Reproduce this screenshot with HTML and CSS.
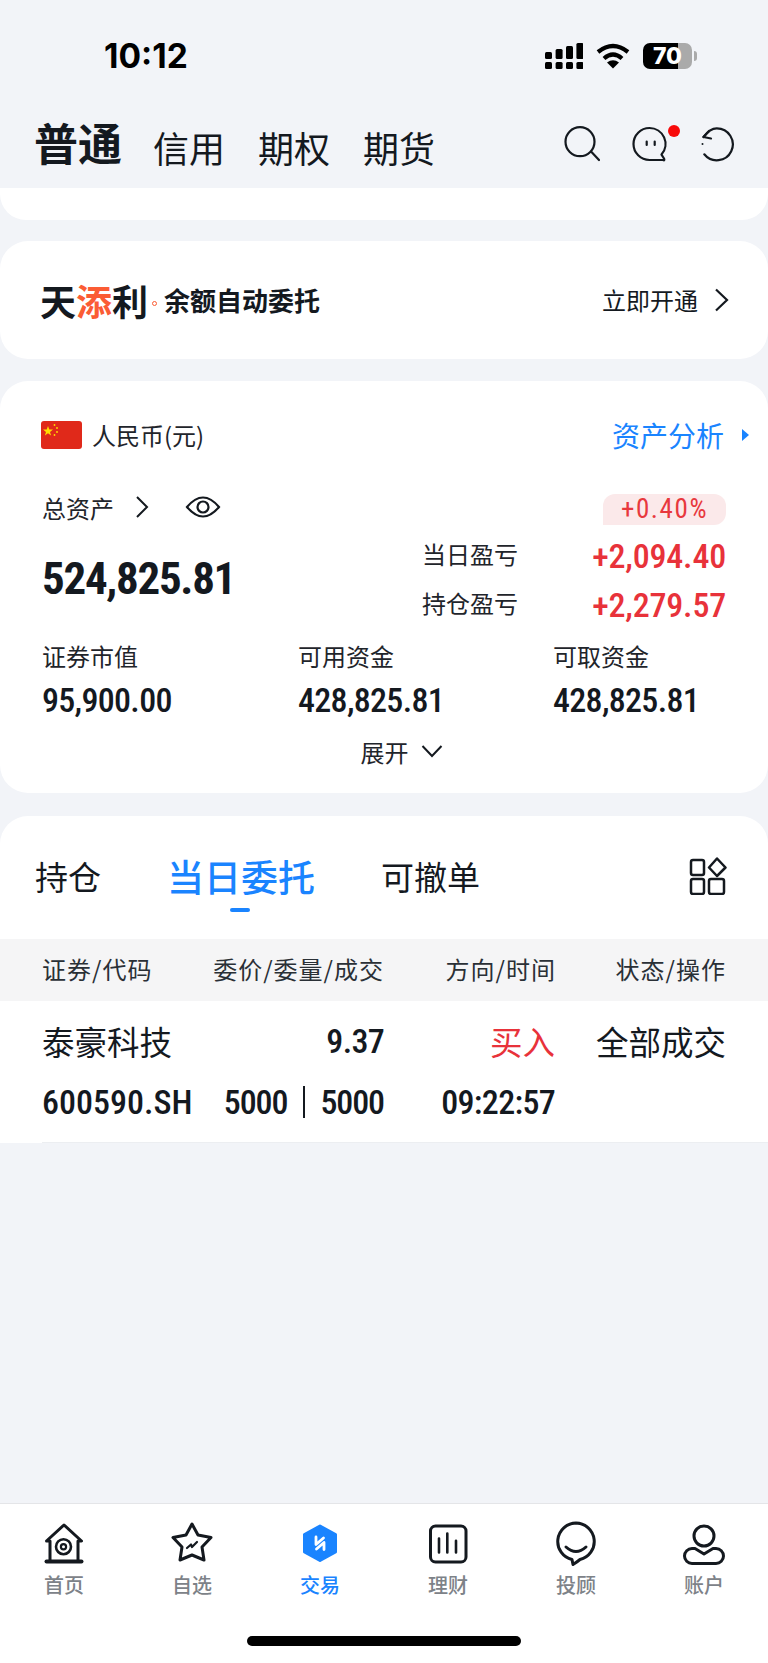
FILE: index.html
```html
<!DOCTYPE html>
<html lang="zh-CN">
<head>
    <meta charset="UTF-8">
    <meta name="viewport" content="width=device-width, initial-scale=1.0">
    <title>交易</title>
    <link rel="stylesheet" href="styles.css">
</head>
<body>
    <div class="status-bar">
        <span class="clock">10:12</span>
        <div class="status-icons">
            <svg class="signal" width="38" height="26" viewBox="0 0 38 26" fill="#000">
                <rect x="0" y="19" width="7" height="7" rx="1.5"/>
                <rect x="10.6" y="19" width="7" height="7" rx="1.5"/>
                <rect x="21" y="19" width="7" height="7" rx="1.5"/>
                <rect x="31.4" y="19" width="7" height="7" rx="1.5"/>
                <rect x="0" y="9" width="7" height="7" rx="1.5"/>
                <rect x="10.6" y="6" width="7" height="10" rx="1.5"/>
                <rect x="21" y="3" width="7" height="13" rx="1.5"/>
                <rect x="31.4" y="0" width="7" height="16" rx="1.5"/>
            </svg>
            <svg class="wifi" width="34" height="26" viewBox="0 0 34 26" fill="none" stroke="#000">
                <path d="M2 9Q17 -3 32 9" stroke-width="4.2"/>
                <path d="M8 15.5Q17 7.5 26 15.5" stroke-width="4.2"/>
                <path d="M17 25.5L11 19.5Q17 15 23 19.5Z" fill="#000" stroke="none"/>
            </svg>
            <div class="battery"><span>70</span></div>
            <i class="battery-nub"></i>
        </div>
    </div>

    <div class="nav">
        <span class="nav-main">普通</span>
        <span class="nav-item">信用</span>
        <span class="nav-item">期权</span>
        <span class="nav-item">期货</span>
        <div class="nav-icons">
            <svg width="36" height="36" viewBox="0 0 36 36" fill="none" stroke="#14191f" stroke-width="2.2" stroke-linecap="round">
                <circle cx="16" cy="15.7" r="14.5"/>
                <path d="M27.5 26L35 34"/>
            </svg>
            <div class="chat-icon">
                <svg width="36" height="38" viewBox="0 0 36 38" fill="none" stroke="#14191f" stroke-width="2.2" stroke-linejoin="round">
                    <path d="M17.5 2A16 16 0 0 0 17.5 34H31Q33 35 32 32.5L29.5 28.6A16 16 0 0 0 17.5 2Z"/>
                    <path d="M14.7 15.5V19M22.7 15.5V19" stroke-linecap="round"/>
                </svg>
                <i class="red-dot"></i>
            </div>
            <svg width="36" height="38" viewBox="-2 -2 36 38" fill="none" stroke="#14191f" stroke-width="2.2" stroke-linecap="round" stroke-linejoin="round">
                <path d="M1.5 9Q8 0.3 14.7 0.3A16 16 0 1 1 2.3 26.3"/>
                <path d="M7 3L1.5 9L9 10.5"/>
                <circle cx="0.5" cy="16" r="1" fill="#14191f" stroke="none"/>
            </svg>
        </div>
    </div>

    <div class="card card-stub"></div>

    <div class="card promo">
        <div class="promo-logo">
            <span class="promo-name">天<em>添</em>利</span>
            <i class="promo-dot"></i>
            <span class="promo-slogan">余额自动委托</span>
        </div>
        <div class="promo-link">
            <span>立即开通</span>
            <svg width="16" height="24" viewBox="0 0 16 24" fill="none" stroke="#14191f" stroke-width="2.2"><path d="M2 1.5L13 12L2 22.5"/></svg>
        </div>
    </div>

    <div class="card assets">
        <div class="assets-head">
            <div class="currency">
                <svg class="flag" width="41" height="28" viewBox="0 0 41 28">
                    <rect width="41" height="28" rx="3" fill="#e0291a"/>
                    <path d="M7 5l1.3 3.6h3.7l-3 2.3 1.1 3.6-3.1-2.2-3.1 2.2 1.1-3.6-3-2.3h3.7z" fill="#ffde00"/>
                    <circle cx="13.5" cy="4" r="0.9" fill="#ffde00"/>
                    <circle cx="16" cy="7" r="0.9" fill="#ffde00"/>
                    <circle cx="16" cy="11" r="0.9" fill="#ffde00"/>
                    <circle cx="13.5" cy="14" r="0.9" fill="#ffde00"/>
                </svg>
                <span>人民币(元)</span>
            </div>
            <div class="analysis">
                <span>资产分析</span>
                <i class="analysis-arrow"></i>
            </div>
        </div>

        <div class="summary">
            <div class="summary-left">
                <div class="total-label">
                    <span>总资产</span>
                    <svg class="total-chevron" width="14" height="24" viewBox="0 0 14 24" fill="none" stroke="#14191f" stroke-width="2"><path d="M2 2L12 12L2 22"/></svg>
                    <svg class="eye" width="36" height="24" viewBox="0 0 36 24" fill="none" stroke="#14191f" stroke-width="2.2">
                        <path d="M2 12Q18 -7 34 12Q18 31 2 12Z"/>
                        <circle cx="18" cy="12" r="5.5"/>
                    </svg>
                </div>
                <div class="total-value num">524,825.81</div>
            </div>
            <div class="summary-right">
                <div class="rate num">+0.40%</div>
                <div class="profit-row">
                    <span>当日盈亏</span>
                    <b class="num">+2,094.40</b>
                </div>
                <div class="profit-row">
                    <span>持仓盈亏</span>
                    <b class="num">+2,279.57</b>
                </div>
            </div>
        </div>

        <div class="funds">
            <div class="fund"><span>证券市值</span><b class="num">95,900.00</b></div>
            <div class="fund"><span>可用资金</span><b class="num">428,825.81</b></div>
            <div class="fund"><span>可取资金</span><b class="num">428,825.81</b></div>
        </div>

        <div class="expand">
            <span>展开</span>
            <svg width="22" height="14" viewBox="0 0 22 14" fill="none" stroke="#14191f" stroke-width="2"><path d="M1.5 2L11 12L20.5 2"/></svg>
        </div>
    </div>

    <div class="card orders">
        <div class="order-tabs">
            <span class="order-tab">持仓</span>
            <span class="order-tab active">当日委托</span>
            <span class="order-tab">可撤单</span>
            <svg class="grid-icon" width="38" height="38" viewBox="0 0 38 38" fill="none" stroke="#14191f" stroke-width="2.5" stroke-linejoin="round">
                <rect x="2" y="3" width="13" height="15" rx="2"/>
                <rect x="2" y="22" width="13" height="15" rx="2"/>
                <rect x="20" y="22" width="15" height="15" rx="2"/>
                <path d="M28 1.5L36.5 10.5L28 19L20 10.5Z"/>
            </svg>
        </div>

        <div class="table-head">
            <span>证券/代码</span>
            <span>委价/委量/成交</span>
            <span>方向/时间</span>
            <span>状态/操作</span>
        </div>

        <div class="order-row">
            <span class="stock-name">泰豪科技</span>
            <span class="num cell-num">9.37</span>
            <span class="buy">买入</span>
            <span class="state">全部成交</span>
            <span class="num cell-num stock-code">600590.SH</span>
            <span class="num cell-num amount"><span>5000</span><i></i><span>5000</span></span>
            <span class="num cell-num">09:22:57</span>
            <span></span>
        </div>
    </div>

    <div class="spacer"></div>

    <div class="tabbar">
        <div class="tabs">
            <div class="tab">
                <svg width="48" height="46" viewBox="0 0 48 46" fill="none" stroke="#14191f" stroke-width="3" stroke-linejoin="round" stroke-linecap="round">
                    <path d="M10 40V21H6.5L24 5L41.5 21H38V40"/>
                    <path d="M6.5 41.5H41.5" stroke-width="4"/>
                    <circle cx="23.5" cy="26.7" r="7.5" stroke-width="2.6"/>
                    <circle cx="23.5" cy="26.7" r="2.6" stroke-width="2.2"/>
                </svg>
                <span>首页</span>
            </div>
            <div class="tab">
                <svg width="48" height="46" viewBox="0 0 48 46" fill="none" stroke="#14191f" stroke-width="3" stroke-linejoin="round" stroke-linecap="round">
                    <path d="M24 4L30 15L43 17.5L34 27L36 40L24 35L12 40L14 27L5 17.5L18 15Z"/>
                    <path d="M19 28L23 24.5L24 27L29 22" stroke-width="2.2"/>
                </svg>
                <span>自选</span>
            </div>
            <div class="tab active">
                <svg width="48" height="46" viewBox="0 0 48 46" fill="none" stroke-linejoin="round" stroke-linecap="round">
                    <path d="M24 6L39.5 14.5V32L24 40.5L8.5 32V14.5Z" fill="#1a84ff" stroke="#1a84ff" stroke-width="3"/>
                    <path d="M20 17V24.5L27.5 18M28 29.5V22.5L20.5 29" stroke="#fff" stroke-width="2.8"/>
                </svg>
                <span>交易</span>
            </div>
            <div class="tab">
                <svg width="48" height="46" viewBox="0 0 48 46" fill="none" stroke="#14191f" stroke-width="3" stroke-linecap="round">
                    <rect x="6.500" y="6" width="35.500" height="36" rx="5"/>
                    <path d="M15 18.500V32.500M23.300 13.500V32.500M32 20.700V32.500" stroke-width="2.600"/>
                </svg>
                <span>理财</span>
            </div>
            <div class="tab">
                <svg width="48" height="46" viewBox="0 0 48 46" fill="none" stroke="#14191f" stroke-width="3" stroke-linejoin="round" stroke-linecap="round">
                    <path d="M24 3A18.500 18.500 0 0 1 28 39.500Q25 42 21 44.500L20 39.500A18.500 18.500 0 0 1 24 3Z"/>
                    <path d="M14 27Q24 36 34 27"/>
                </svg>
                <span>投顾</span>
            </div>
            <div class="tab">
                <svg width="48" height="46" viewBox="0 0 48 46" fill="none" stroke="#14191f" stroke-width="3" stroke-linejoin="round">
                    <circle cx="24" cy="16" r="10"/>
                    <path d="M12 28.500H15L24 34L33 28.500H36A7.500 7.500 0 0 1 36 43.500H12A7.500 7.500 0 0 1 12 28.500Z"/>
                </svg>
                <span>账户</span>
            </div>
        </div>
        <div class="home-indicator"></div>
    </div>
</body>
</html>
```

FILE: styles.css
```css
body {
    margin: 0;
    height: 1663px;
    display: flex;
    flex-direction: column;
    background-color: #f2f4f8;
    color: #14191f;
    font-family: "Noto Sans CJK SC", "Liberation Sans", sans-serif;
    overflow: hidden;
}

i, em {
    font-style: normal;
}

/* digits in the screenshot are a narrow DIN style face */
.num {
    font-family: Roboto, "Noto Sans CJK SC", sans-serif;
    font-stretch: 75%;
    font-weight: 500;
}

.status-bar {
    height: 100px;
    box-sizing: border-box;
    padding: 12px 71px 0 104px;
    display: flex;
    justify-content: space-between;
    align-items: center;
}

.clock {
    font-family: Inter, "Liberation Sans", sans-serif;
    font-size: 33.5px;
    font-weight: 700;
    line-height: 36px;
    color: #000;
}

.status-icons {
    display: flex;
    align-items: center;
}

.wifi {
    margin-left: 13px;
}

.battery {
    margin-left: 13px;
    width: 49px;
    height: 26px;
    border-radius: 7px;
    background: linear-gradient(90deg, #000 71%, #aaa 71%);
    display: flex;
    justify-content: center;
    align-items: center;
    color: #fff;
    font-family: Inter, "Liberation Sans", sans-serif;
    font-size: 23px;
    font-weight: 800;
    line-height: 26px;
}

.battery-nub {
    width: 3px;
    height: 10px;
    margin-left: 2px;
    border-radius: 0 3px 3px 0;
    background-color: #aaa;
}

.nav {
    height: 88px;
    box-sizing: border-box;
    padding: 19px 32px 0 34px;
    display: flex;
    align-items: flex-start;
}

.nav-main {
    font-size: 44px;
    font-weight: 700;
    line-height: 46px;
    margin-right: 31px;
}

.nav-item {
    font-size: 36px;
    line-height: 46px;
    margin-top: 5px;
    margin-right: 33px;
}

.nav-icons {
    margin-left: auto;
    margin-top: 7px;
    display: flex;
    gap: 32px;
}

.chat-icon {
    position: relative;
    width: 36px;
    height: 38px;
}

.red-dot {
    position: absolute;
    left: 36px;
    top: -1px;
    width: 12px;
    height: 12px;
    border-radius: 50%;
    background-color: #f80a0a;
}

.card {
    background-color: #fff;
    border-radius: 28px;
}

.card-stub {
    height: 32px;
    border-radius: 0 0 26px 26px;
    margin-bottom: 21px;
}

.promo {
    height: 118px;
    box-sizing: border-box;
    padding: 0 38px 0 40px;
    margin-bottom: 22px;
    display: flex;
    justify-content: space-between;
    align-items: center;
}

.promo-logo {
    display: flex;
    align-items: center;
}

.promo-name {
    font-size: 36px;
    font-weight: 700;
    line-height: 44px;
}

.promo-name em {
    color: #fb5c34;
}

.promo-dot {
    width: 3px;
    height: 3px;
    margin: 6px 7px 0 4px;
    border: 1px solid #fb5c34;
    border-radius: 50%;
}

.promo-slogan {
    font-size: 26px;
    font-weight: 700;
    line-height: 34px;
}

.promo-link {
    display: flex;
    align-items: center;
    gap: 16px;
    font-size: 24px;
    line-height: 34px;
}

.assets {
    height: 412px;
    box-sizing: border-box;
    padding: 40px 42px 0;
    margin-bottom: 23px;
}

.assets-head {
    height: 30px;
    display: flex;
    justify-content: space-between;
    align-items: flex-start;
    margin-right: -23px;
    margin-bottom: 43px;
}

.currency {
    margin-left: -1px;
    display: flex;
    align-items: center;
    gap: 10px;
    font-size: 24px;
    line-height: 26px;
    color: #1f252b;
}

.analysis {
    display: flex;
    align-items: center;
    gap: 18px;
    color: #1a84ff;
    font-size: 28px;
    line-height: 28px;
}

.analysis-arrow {
    width: 0;
    height: 0;
    border-left: 7px solid #1a84ff;
    border-top: 6px solid transparent;
    border-bottom: 6px solid transparent;
}

.summary {
    display: flex;
    justify-content: space-between;
}

.total-label {
    display: flex;
    align-items: center;
    height: 26px;
    font-size: 24px;
    color: #1f252b;
}

.total-chevron {
    margin-left: 21px;
}

.eye {
    margin-left: 36px;
}

.total-value {
    margin-top: 37px;
    font-size: 45px;
    font-weight: 700;
    line-height: 44px;
    letter-spacing: -1.3px;
}

.summary-right {
    width: 304px;
    display: flex;
    flex-direction: column;
    align-items: flex-end;
}

.rate {
    width: 123px;
    height: 31px;
    border-radius: 12px 12px 12px 0;
    background-color: #fbe9ea;
    color: #e8383d;
    font-size: 27px;
    font-weight: 400;
    letter-spacing: 1.6px;
    line-height: 31px;
    text-align: center;
    margin-bottom: 15px;
}

.profit-row {
    width: 100%;
    height: 32px;
    display: flex;
    justify-content: space-between;
    align-items: center;
    font-size: 24px;
    line-height: 28px;
    color: #1f252b;
    margin-bottom: 17px;
}

.profit-row span {
    margin-bottom: 4px;
}

.profit-row b {
    color: #e8323a;
    font-size: 34px;
    font-weight: 500;
    letter-spacing: -0.2px;
}

.funds {
    display: grid;
    grid-template-columns: 256px 255px 1fr;
    margin-top: 4px;
}

.fund {
    display: flex;
    flex-direction: column;
    font-size: 24px;
    line-height: 28px;
    color: #1f252b;
}

.fund b {
    margin-top: 13px;
    font-size: 34px;
    line-height: 34px;
    letter-spacing: -0.7px;
    color: #14191f;
}

.expand {
    margin-top: 21px;
    height: 26px;
    display: flex;
    justify-content: center;
    align-items: center;
    gap: 12px;
    font-size: 24px;
    padding-left: 35px;
    color: #1f252b;
}

.orders {
    border-radius: 28px 28px 0 0;
}

.order-tabs {
    height: 123px;
    box-sizing: border-box;
    padding: 38px 41px 0 35px;
    display: flex;
    align-items: flex-start;
}

.order-tab {
    position: relative;
    font-size: 33px;
    line-height: 44px;
    margin-right: 66px;
}

.order-tab.active {
    font-size: 37px;
    font-weight: 500;
    color: #1a84ff;
}

.order-tab.active::after {
    content: "";
    position: absolute;
    left: 63px;
    top: 54px;
    width: 20px;
    height: 4px;
    border-radius: 2px;
    background-color: #1a84ff;
}

.grid-icon {
    margin-left: auto;
    margin-top: 3px;
}

.table-head {
    height: 62px;
    box-sizing: border-box;
    padding: 0 41px 4px 42px;
    display: grid;
    grid-template-columns: 170px 172px 172px 170px;
    align-items: center;
    background-color: #f5f5f6;
    font-size: 24px;
    letter-spacing: 1px;
    color: #2a3036;
    text-align: right;
}

.table-head span:first-child {
    text-align: left;
}

.order-row {
    margin-left: 42px;
    padding: 18px 41px 18px 0;
    display: grid;
    grid-template-columns: 170px 172px 171px 171px;
    row-gap: 17px;
    border-bottom: 1px solid #eceef1;
    text-align: right;
    font-size: 32.5px;
    line-height: 44px;
}

.order-row .stock-name {
    text-align: left;
}

.cell-num {
    font-size: 34px;
    font-weight: 500;
    letter-spacing: -0.7px;
}

.order-row .stock-code {
    text-align: left;
    white-space: nowrap;
    letter-spacing: 0;
}

.amount {
    display: flex;
    justify-content: flex-end;
    align-items: center;
    letter-spacing: -1.1px;
}

.amount i {
    width: 2px;
    height: 32px;
    margin: 0 15px 0 16px;
    background-color: #14191f;
}

.buy {
    color: #e8323a;
}

.spacer {
    flex: 1;
}

.tabbar {
    background-color: #fff;
    border-top: 1px solid #e4e5e8;
}

.tabs {
    padding-top: 16px;
    display: grid;
    grid-template-columns: repeat(6, 1fr);
}

.tab {
    display: flex;
    flex-direction: column;
    align-items: center;
    gap: 7px;
    font-size: 20px;
    font-weight: 500;
    line-height: 24px;
    color: #7d8288;
}

.tab.active {
    color: #1a84ff;
}

.home-indicator {
    width: 274px;
    height: 10px;
    margin: 39px auto 17px;
    border-radius: 5px;
    background-color: #000;
}
```
